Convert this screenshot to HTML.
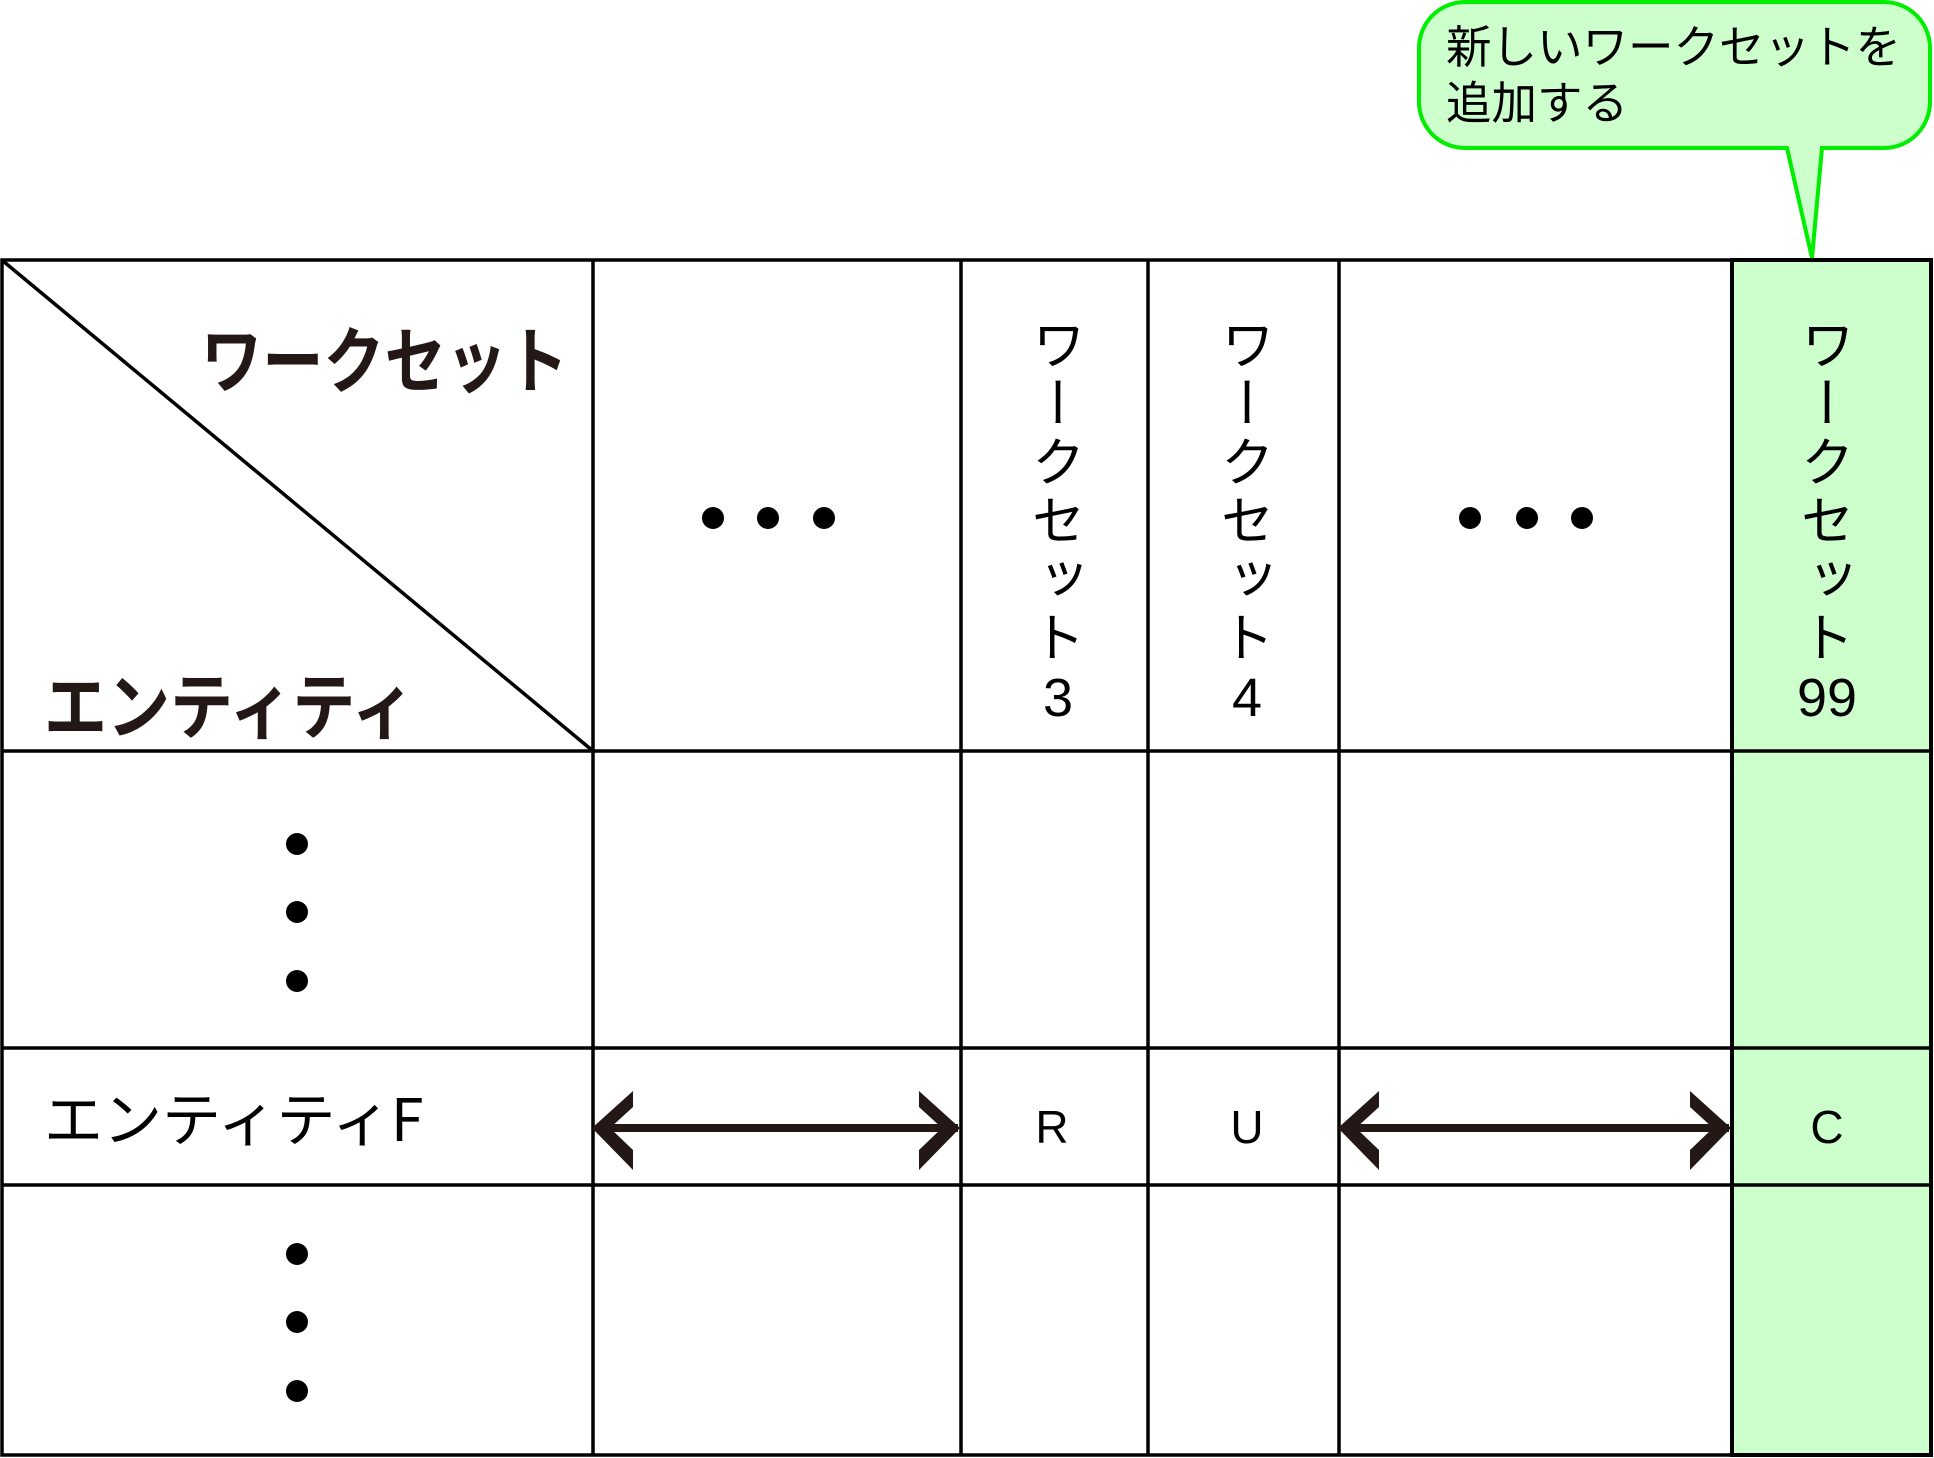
<!DOCTYPE html>
<html><head><meta charset="utf-8"><style>
html,body{margin:0;padding:0;background:#fff;}
body{width:1934px;height:1458px;position:relative;overflow:hidden;font-family:"Liberation Sans","Noto Sans CJK JP",sans-serif;color:#000;}
.a{position:absolute;white-space:nowrap;}
.v{position:absolute;writing-mode:vertical-rl;font-size:54px;line-height:60px;letter-spacing:4.5px;font-family:"Noto Sans CJK JP",sans-serif;width:60px;}
</style></head><body>
<svg width="1934" height="1458" style="position:absolute;left:0;top:0">
<path d="M1465,2 H1884 A46,46 0 0 1 1930,48 V102 A46,46 0 0 1 1884,148 H1822 L1812,258 L1787,148 H1465 A46,46 0 0 1 1419,102 V48 A46,46 0 0 1 1465,2 Z" fill="#ccffcc" stroke="#00ee00" stroke-width="4"/>
<rect x="1732" y="260" width="199" height="1195" fill="#ccffcc"/>
<g stroke="#000" stroke-width="3.5" fill="none">
<rect x="2" y="260" width="1929" height="1195"/>
<line x1="593" y1="260" x2="593" y2="1455"/>
<line x1="961" y1="260" x2="961" y2="1455"/>
<line x1="1148" y1="260" x2="1148" y2="1455"/>
<line x1="1339" y1="260" x2="1339" y2="1455"/>
<line x1="2" y1="751" x2="1931" y2="751"/>
<line x1="2" y1="1048" x2="1931" y2="1048"/>
<line x1="2" y1="1185" x2="1931" y2="1185"/>
<line x1="3" y1="261" x2="593" y2="751"/>
</g>
<rect x="1732" y="260" width="199" height="1195" fill="none" stroke="#000" stroke-width="4"/>
<g fill="#000">
<circle cx="713" cy="518" r="11"/><circle cx="768" cy="518" r="11"/><circle cx="824" cy="518" r="11"/>
<circle cx="1470" cy="518" r="11"/><circle cx="1527" cy="518" r="11"/><circle cx="1582" cy="518" r="11"/>
<circle cx="297" cy="844" r="11"/><circle cx="297" cy="912" r="11"/><circle cx="297" cy="981" r="11"/>
<circle cx="297" cy="1254" r="11"/><circle cx="297" cy="1322" r="11"/><circle cx="297" cy="1391" r="11"/>
</g>
<g fill="#231815">
<rect x="596" y="1124" width="362" height="8"/>
<polygon points="592,1128 633,1091 633,1107 610,1128 633,1150 633,1170"/>
<polygon points="960,1128 919,1091 919,1107 942,1128 919,1150 919,1170"/>
<rect x="1342" y="1124" width="387" height="8"/>
<polygon points="1338,1128 1379,1091 1379,1107 1356,1128 1379,1150 1379,1170"/>
<polygon points="1731,1128 1690,1091 1690,1107 1713,1128 1690,1150 1690,1170"/>
</g>
</svg>
<div class="a" style="left:1446px;top:16px;font-size:45.5px;line-height:56px;font-family:'Noto Sans CJK JP',sans-serif;">新しいワークセットを<br>追加する</div>
<div class="a" style="left:201px;top:306px;font-size:72px;line-height:100px;font-weight:bold;color:#231815;font-family:'Noto Sans CJK JP',sans-serif;transform:scaleX(0.85);transform-origin:0 0;">ワークセット</div>
<div class="a" style="left:44px;top:652px;font-size:72px;line-height:100px;font-weight:bold;color:#231815;font-family:'Noto Sans CJK JP',sans-serif;transform:scaleX(0.875);transform-origin:0 0;">エンティティ</div>
<div class="a" style="left:44px;top:1076px;font-size:59px;line-height:80px;font-family:'Noto Sans CJK JP',sans-serif;">エンティティF</div>
<div class="v" style="left:1028px;top:317px;">ワークセット</div>
<div class="a" style="left:1028px;top:666px;width:60px;text-align:center;font-size:54px;line-height:64px;">3</div>
<div class="v" style="left:1217px;top:317px;">ワークセット</div>
<div class="a" style="left:1217px;top:666px;width:60px;text-align:center;font-size:54px;line-height:64px;">4</div>
<div class="v" style="left:1797px;top:317px;">ワークセット</div>
<div class="a" style="left:1767px;top:666px;width:120px;text-align:center;font-size:54px;line-height:64px;">99</div>
<div class="a" style="left:1012px;top:1100px;width:80px;text-align:center;font-size:46px;line-height:54px;">R</div>
<div class="a" style="left:1207px;top:1100px;width:80px;text-align:center;font-size:46px;line-height:54px;">U</div>
<div class="a" style="left:1787px;top:1100px;width:80px;text-align:center;font-size:46px;line-height:54px;">C</div>
</body></html>
